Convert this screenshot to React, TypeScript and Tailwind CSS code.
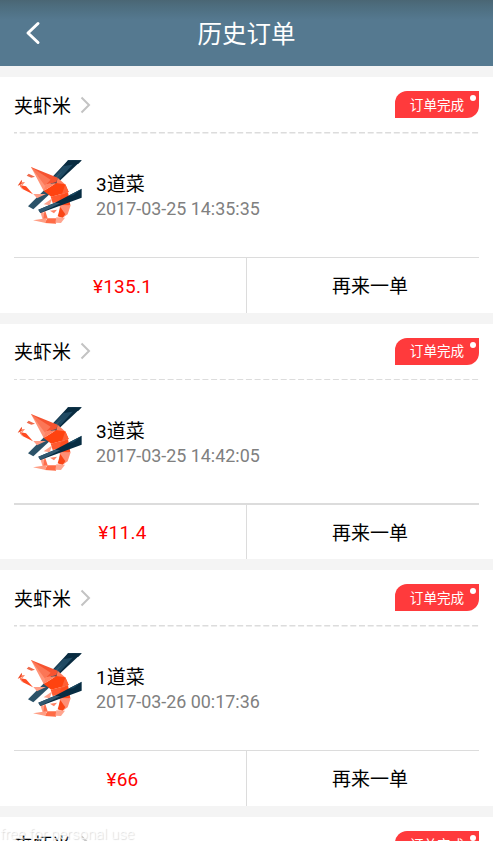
type Order = { dishes: number; time: string; price: string };

const orders: Order[] = [
  { dishes: 3, time: '2017-03-25 14:35:35', price: '135.1' },
  { dishes: 3, time: '2017-03-25 14:42:05', price: '11.4' },
  { dishes: 1, time: '2017-03-26 00:17:36', price: '66' },
];

function ShrimpLogo() {
  return (
    <svg viewBox="12 12 204 204" className="h-[68px] w-[68px] shrink-0">
      <path d="M174 16H215L138 88L108 86Z" fill="#082b40" />
      <path d="M160 34L187 16H200L135 88L112 84Z" fill="#204a63" />
      <path d="M174 16H215L205 26L162 33Z" fill="#082b40" />
      <path d="M132 69L158 48L122 92Z" fill="#315b72" />
      <path d="M102 106L125 112L70 163L54 154Z" fill="#2b5268" />
      <path d="M63 36L123 85L101 108Z" fill="#ff9478" />
      <path d="M63 36L143 68L139 82L108 88Z" fill="#f65330" />
      <path d="M63 36L122 74L105 92Z" fill="#fb7656" />
      <path d="M143 68L165 88L139 86Z" fill="#ff7d5c" />
      <path d="M101 108L139 84L166 88L176 111L124 125Z" fill="#ff4310" />
      <path d="M101 108L107 88L139 84Z" fill="#ff8465" />
      <path d="M166 88L176 111L156 117Z" fill="#ff6036" />
      <path d="M122 125L174 112L150 140L128 144Z" fill="#ff5a30" />
      <path d="M152 122L174 112L181 151L151 166L148 140Z" fill="#ff4c1e" />
      <path d="M150 150L182 151L173 178L158 188L146 187Z" fill="#ff8f75" />
      <path d="M151 156L166 178L158 188L143 184Z" fill="#fa4515" />
      <path d="M98 168L112 191L99 197L92 174Z" fill="#ffa18b" />
      <path d="M104 163L113 190L100 192Z" fill="#ff6e4c" />
      <path d="M112 190L139 190L138 206L104 204Z" fill="#ff6b45" />
      <path d="M139 187L165 188L153 204L136 203Z" fill="#ffa58f" />
      <path d="M69 196L109 190L107 204Z" fill="#ff9d83" />
      <path d="M120 167L141 164L132 175Z" fill="#ff8264" />
      <path d="M101 148L127 130L119 151Z" fill="#ffa28b" />
      <path d="M70 117L108 117L81 130Z" fill="#ff9d86" />
      <path d="M50 62L56 56L75 65L64 68Z" fill="#ef694a" />
      <path d="M23 92L35 74L37 87Z" fill="#ef4b25" />
      <path d="M33 82L45 81L37 91Z" fill="#ff8c6c" />
      <path d="M29 90L48 94L69 118L39 103Z" fill="#ff4b22" />
      <path d="M29 93L34 92L38 104Z" fill="#ff8264" />
      <path d="M85 164L135 143L215 101V128L91 174Z" fill="#062c42" />
      <path d="M85 164L135 143L151 145L91 174Z" fill="#315870" />
      <path d="M175 122L215 102L190 121Z" fill="#194861" />
    </svg>
  );
}

function StatusBadge() {
  return (
    <div className="relative flex h-[27px] w-[84px] items-center justify-center rounded-tl-[12px] rounded-br-[12px] bg-[#ff3a3c] pt-[2px] text-[13.6px] leading-none text-white">
      订单完成
      <span className="absolute top-[4px] right-[3px] h-[6px] w-[6px] rounded-full bg-white" />
    </div>
  );
}

function ShopRow() {
  return (
    <div className="mx-[14px] flex h-[55px] shrink-0 items-center justify-between">
      <div className="flex items-center text-[19px] leading-none text-black">
        <span className="pt-[3px]">夹虾米</span>
        <svg viewBox="0 0 12 18" className="ml-[9px] h-[18px] w-[12px]" fill="none">
          <path d="M1.5 1.5L9 9L1.5 16.5" stroke="#c3c3c3" strokeWidth="2" />
        </svg>
      </div>
      <StatusBadge />
    </div>
  );
}

function OrderCard({ order }: { order: Order }) {
  return (
    <section className="flex h-[235.67px] shrink-0 flex-col bg-white">
      <ShopRow />
      <svg className="ml-[14px] h-[1.5px] w-[465px] shrink-0" viewBox="0 0 465 1.5" preserveAspectRatio="none">
        <path d="M0 .75H465" stroke="#dcdcdc" strokeWidth="1.5" strokeDasharray="6 2.7" strokeDashoffset="3" />
      </svg>
      <div className="flex h-[123px] shrink-0 items-center px-[14px] pb-[4px]">
        <ShrimpLogo />
        <div className="ml-[14px] flex flex-col pt-[7px]">
          <span className="pt-px text-[19px] leading-[24px] text-black">{order.dishes}道菜</span>
          <span className="text-[17.9px] leading-[24px] text-[#808080]">{order.time}</span>
        </div>
      </div>
      <div className="mx-[14px] h-[1.4px] shrink-0 bg-[#dcdcdc]" />
      <div className="flex flex-1 text-[19px]">
        <div className="flex w-[247px] items-center justify-center border-r border-[#dcdcdc] pt-[3px] pr-px tracking-[0.25px] text-[#ff0000]">
          ¥{order.price}
        </div>
        <div className="flex flex-1 items-center justify-center pt-[4px] text-black">再来一单</div>
      </div>
    </section>
  );
}

export default function App() {
  return (
    <main className="relative flex h-[841px] w-[493px] flex-col overflow-hidden bg-[#f4f4f4] font-[Roboto,'Noto_Sans_CJK_SC',sans-serif]">
      <header className="grid h-[66px] shrink-0 grid-cols-[66px_1fr_66px] items-center bg-[#557990] bg-[linear-gradient(to_bottom,#4a6674_0px,#4d6d7e_6px,#557990_20px)] text-white">
        <svg viewBox="0 0 16 24" className="ml-[25px] h-[24px] w-[16px]" fill="none">
          <path d="M13 2.5L3 12L13 21.5" stroke="white" strokeWidth="3" strokeLinecap="round" strokeLinejoin="round" />
        </svg>
        <h1 className="pt-[5px] text-center text-[24.5px] leading-none">历史订单</h1>
      </header>
      <div className="mt-[11px] flex flex-col gap-[11px]">
        {orders.map((order) => (
          <OrderCard key={order.time} order={order} />
        ))}
        <section className="h-[56px] shrink-0 bg-white">
          <ShopRow />
        </section>
      </div>
      <div className="absolute top-[825px] left-0 text-[14.9px] leading-[18px] font-light whitespace-nowrap text-white/80 [text-shadow:1px_1px_1px_#d8d8d8]">
        free for personal use
      </div>
    </main>
  );
}
